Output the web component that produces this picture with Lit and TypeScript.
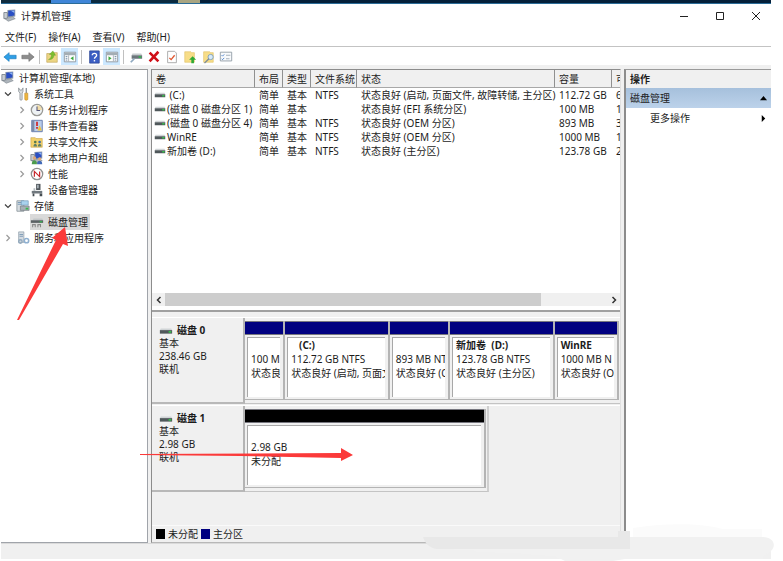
import { LitElement, html, svg, css, nothing } from "lit";
import { customElement } from "lit/decorators.js";
import { classMap } from "lit/directives/class-map.js";

const drive = svg`<path d="M2 5h12l1 2H1z" fill="#d0d4d6"/><path d="M1 7h14v4H1z" fill="#50585b"/><path d="M11 8h3v2h-3z" fill="#35c04a"/>`;
const monitor = svg`<path d="M5 1l9-0.500v8L5 10z" fill="#8d99a8"/><path d="M6 2l7-.5v6L6 8.600z" fill="#2a4fc4"/><path d="M9 2l4-.4v3z" fill="#8fb4f2"/><path d="M1 4h4v7H1z" fill="#c9ced3" stroke="#7c858e"/><path d="M2 11l9-2 3 2-8 3z" fill="#aeb5bc" stroke="#717a83" stroke-width=".6"/>`;
const folder = svg`<path d="M1 3h5l1 1h7v10H1z" fill="#f2d16b" stroke="#c79c3c" stroke-width=".6"/>`;

const icons: Record<string, unknown> = {
  computer: monitor,
  drive,
  back: svg`<path d="M1 8l6-5v3h8v4H7v3z" fill="#2f9fe6" stroke="#1878b8" stroke-width=".7"/>`,
  forward: svg`<path d="M15 8L9 3v3H1v4h8v3z" fill="#8d8d8d" stroke="#6e6e6e" stroke-width=".7"/>`,
  upFolder: svg`<path d="M2 4h5l1-1h6v11H2z" fill="#ecd583" stroke="#bfa254" stroke-width=".7"/><path d="M4 11c3 0 6-1 6-5h2L9 1 5 5h2.500c0 3-1.500 5-3.500 6z" fill="#7cbf2e" stroke="#5a9a26" stroke-width=".5"/>`,
  tree: svg`<path d="M1.500 2.500h13v11h-13z" fill="#fff" stroke="#8a949b"/><path d="M2 3h12v3H2z" fill="#a3adb4"/><path d="M6 6h1v7H6z" fill="#a3adb4"/><path d="M3 7.500h2M3 9.500h2M3 11.500h2" stroke="#6782a0"/><path d="M12 7v5L8.500 9.500z" fill="#3aa83e"/>`,
  pane: svg`<path d="M1.500 2.500h13v11h-13z" fill="#fff" stroke="#8a949b"/><path d="M2 3h12v3H2z" fill="#a3adb4"/><path d="M9 6h1v7H9z" fill="#a3adb4"/><path d="M11 7.500h2M11 9.500h2M11 11.500h2" stroke="#6782a0"/><path d="M4 7v5l3.500-2.500z" fill="#3aa83e"/>`,
  help: svg`<path d="M3 1h11v14H3z" fill="#3c5fc4" stroke="#26408f" stroke-width=".8"/><path d="M6 6c0-3 5-3 5 0 0 2-2.500 2-2.500 4" fill="none" stroke="#fff" stroke-width="1.500"/><path d="M7.700 11.500h1.600v1.600H7.700z" fill="#fff"/>`,
  connect: svg`<path d="M4 4h10l1 2H3z" fill="#c8cdd0"/><path d="M3 6h12v4H3z" fill="#6b757b"/><path d="M11 7h3v2h-3z" fill="#35b050"/><path d="M6 10l-4 4" stroke="#8fa9c0" stroke-width="2"/>`,
  remove: svg`<path d="M3 3l10 10M13 2L3 13" stroke="#d01018" stroke-width="3"/>`,
  check: svg`<path d="M3 1.500h8l2 2v11H3z" fill="#fff" stroke="#a4a4a4"/><path d="M5 9l2 2 4-5" fill="none" stroke="#e0552e" stroke-width="1.500"/>`,
  upload: svg`<path d="M2 2h7l1 1h3v11H2z" fill="#f7dd88" stroke="#e0c066" stroke-width=".7"/><path d="M11 7l4 4h-2.500v4h-3v-4H7z" fill="#2faa35"/>`,
  search: svg`<path d="M3 2h7l1 1h3v11H3z" fill="#f7dd88" stroke="#e0c066" stroke-width=".7"/><circle cx="11" cy="8" r="3" fill="#d5eafa" stroke="#7d9db8"/><path d="M9 10l-5 5" stroke="#7d8c98" stroke-width="1.600"/>`,
  list: svg`<path d="M1.500 2.500h13v10h-13z" fill="#f8fafc" stroke="#8f9aa3"/><path d="M3 6l1 1 2-2M3 10l1 1 2-2" fill="none" stroke="#3d78c8"/><path d="M8 6h5M8 10h4" stroke="#9aa7b2"/>`,
  tools: svg`<path d="M3 1v4l1.500 2v7c0 1.500 2.500 1.500 2.500 0V7l1-2V1L6.500 3.500h-2z" fill="#d9dde0" stroke="#80878c" stroke-width=".8"/><path d="M11 1h1.500v6H11z" fill="#8c9296"/><path d="M10 7h3.500v7c0 1.500-3.500 1.500-3.500 0z" fill="#efb63d" stroke="#b98222" stroke-width=".6"/>`,
  clock: svg`<circle cx="8" cy="8" r="6.500" fill="#eef2f4" stroke="#9a9a96" stroke-width="1.500"/><path d="M8 2.500A5.500 5.500 0 0 1 13.500 8H8z" fill="#f1dca8"/><path d="M8 4v4.500h3.500" fill="none" stroke="#557" stroke-width="1.200"/>`,
  events: svg`<path d="M2 1.500h12v13H2z" fill="#b9cdec" stroke="#5d75a8"/><path d="M2 2h3v12H2z" fill="#7c8ca8"/><path d="M8 3v5" stroke="#d12a2a" stroke-width="2"/><path d="M7 9h2v2H7z" fill="#d12a2a"/><path d="M11 7l2.500 6h-5z" fill="#eec23a"/>`,
  shared: svg`${folder}<circle cx="6" cy="8" r="1.500" fill="#55784c"/><circle cx="11" cy="8" r="1.500" fill="#3e6ea8"/><path d="M4 13c0-4 4-4 4 0zM9 13c0-4 4-4 4 0z" fill="#5e7f6a"/>`,
  users: svg`${monitor}<circle cx="5" cy="8" r="2" fill="#dca878"/><path d="M2 15c0-6 6-6 6 0z" fill="#4c9c4c"/><circle cx="11" cy="9" r="1.800" fill="#dca878"/><path d="M8 15c0-5 6-5 6 0z" fill="#4069b8"/>`,
  perf: svg`<circle cx="8" cy="8" r="6.500" fill="#fff" stroke="#8f8f8f" stroke-width="1.500"/><path d="M5 11V5l6 6V5" fill="none" stroke="#c9282d" stroke-width="1.400"/>`,
  device: svg`<path d="M7 1h5v7H7z" fill="#50575c"/><path d="M8 2h2v4H8z" fill="#a8b2b8"/><path d="M2 9h12v3H2z" fill="#70787e"/><path d="M3 12h2v3H3zM11 12h3v3h-3z" fill="#454c51"/><path d="M4 6h2v3H4z" fill="#b5bcc0"/>`,
  storage: svg`<path d="M1 2h8v12H1z" fill="#d7dde1" stroke="#7b868d" stroke-width=".8"/><path d="M2 4h5M2 6h5" stroke="#6f93b4"/><path d="M6 2h8v5H6z" fill="#a9d2ee" stroke="#6a92b5" stroke-width=".7"/><path d="M5 8h10v5H5z" fill="#a7b0b6" stroke="#6c757b" stroke-width=".7"/><path d="M11 10h3v2h-3z" fill="#37b84b"/>`,
  disks: svg`<path d="M4 4h10l1 2H3z" fill="#c3c7c9"/><path d="M1 6h14v3H1z" fill="#5b6164"/><path d="M11 7h3v1.500h-3z" fill="#35b050"/><path d="M3 14v-3h3v3M9 14v-3h3v3" fill="none" stroke="#888" stroke-width="1.200"/>`,
  services: svg`<path d="M3 1h6v12H3z" fill="#d3dae0" stroke="#8f9da9" stroke-width=".8"/><path d="M4 4h4M4 6h4" stroke="#7796b4"/><circle cx="12" cy="11" r="2.500" fill="none" stroke="#8fb0d0" stroke-width="1.800"/><circle cx="5" cy="12" r="2" fill="none" stroke="#92a9bd" stroke-width="1.500"/>`,
};

const icon = (name: string) =>
  html`<svg class="icon" viewBox="0 0 16 16" aria-hidden="true">${icons[name]}</svg>`;

interface Node { name: string; icon: string; level: number; open?: boolean; leaf?: boolean; selected?: boolean; }
const nodes: Node[] = [
  { name: "计算机管理(本地)", icon: "computer", level: 0 },
  { name: "系统工具", icon: "tools", level: 1, open: true },
  { name: "任务计划程序", icon: "clock", level: 2 },
  { name: "事件查看器", icon: "events", level: 2 },
  { name: "共享文件夹", icon: "shared", level: 2 },
  { name: "本地用户和组", icon: "users", level: 2 },
  { name: "性能", icon: "perf", level: 2 },
  { name: "设备管理器", icon: "device", level: 2, leaf: true },
  { name: "存储", icon: "storage", level: 1, open: true },
  { name: "磁盘管理", icon: "disks", level: 2, leaf: true, selected: true },
  { name: "服务和应用程序", icon: "services", level: 1 },
];

const tools: (string | null)[][] = [
  ["back", "后退"], ["forward", "前进"], [null],
  ["upFolder", "上一级"], ["tree", "显示/隐藏控制台树", "on"], [null],
  ["help", "帮助"], ["pane", "显示/隐藏操作窗格", "on"], [null],
  ["connect", "连接"], ["remove", "删除"], ["check", "属性"],
  ["upload", "打开"], ["search", "浏览"], ["list", "设置"],
];

const volumes = [
  ["\u00a0(C:)", "NTFS", "状态良好 (启动, 页面文件, 故障转储, 主分区)", "112.72 GB", "6"],
  ["(磁盘 0 磁盘分区 1)", "", "状态良好 (EFI 系统分区)", "100 MB", "1"],
  ["(磁盘 0 磁盘分区 4)", "NTFS", "状态良好 (OEM 分区)", "893 MB", "3"],
  ["WinRE", "NTFS", "状态良好 (OEM 分区)", "1000 MB", "1"],
  ["新加卷 (D:)", "NTFS", "状态良好 (主分区)", "123.78 GB", "2"],
];

interface Part { title: string; size: string; state: string; }
const disks: { name: string; size: string; free?: boolean; parts: Part[] }[] = [
  {
    name: "磁盘 0", size: "238.46 GB",
    parts: [
      { title: "", size: "100 M", state: "状态良" },
      { title: "\u00a0\u00a0\u00a0(C:)", size: "112.72 GB NTFS", state: "状态良好 (启动, 页面文" },
      { title: "", size: "893 MB NT", state: "状态良好 (O" },
      { title: "新加卷\u00a0\u00a0(D:)", size: "123.78 GB NTFS", state: "状态良好 (主分区)" },
      { title: "WinRE", size: "1000 MB N", state: "状态良好 (O" },
    ],
  },
  { name: "磁盘 1", size: "2.98 GB", free: true, parts: [{ title: "", size: "2.98 GB", state: "未分配" }] },
];

@customElement("app-root")
export class AppRoot extends LitElement {
  static styles = css`
    :host {
      display: flex; flex-direction: column; position: relative; box-sizing: border-box;
      min-height: 100vh; padding: 0 12px 2px 1px; background: #fff; color: #1c1c1c;
      font: 10px/14px "Noto Sans", "Noto Sans CJK SC", sans-serif; overflow: hidden;
    }
    *, *::before { box-sizing: border-box; }
    button { font: inherit; color: inherit; background: none; border: 0; padding: 0; text-align: left; }
    ul { list-style: none; margin: 0; padding: 0; }
    .icon { width: 14px; height: 14px; flex: none; display: block; }
    .desktop {
      height: 4px; border-bottom: 1px solid #2a6c98;
      background: linear-gradient(90deg, #102c3e 50px, #3f86d8 50px 90px, #0a2a40 90px 177px, #a9a582 177px 199px, #04203a 199px);
    }
    .title { display: flex; align-items: center; height: 24px; padding-left: 2px; gap: 4px; }
    .title h1 { font: inherit; margin: 0; flex: 1; }
    .winbtns { display: flex; gap: 6px; }
    .winbtns button { width: 30px; height: 22px; display: grid; place-items: center; }
    .winbtns svg { width: 10px; height: 10px; fill: none; stroke: #222; }
    .menu { display: flex; gap: 12px; height: 18px; padding-left: 4px; align-items: center; }
    .tools { display: flex; align-items: center; gap: 1px; height: 19px; border-top: 1px solid #c3c3c3; padding-top: 1px; }
    .tools button { width: 17px; height: 17px; display: grid; place-items: center; }
    .tools .on { background: #cce8ff; }
    .sep { width: 1px; height: 14px; margin: 0 2px; background: #c0c0c0; }
    .main {
      flex: 1; display: grid; grid-template-columns: 147px minmax(0, 1fr) 147px; gap: 3px;
      background: #f0f0f0; padding-top: 4px;
    }
    .tree, .actions { background: #fff; border-top: 1px solid #9a9a9a; }
    .tree { border-right: 1px solid #a0a4aa; border-bottom: 1px solid #a0a4aa; }
    .node { display: flex; align-items: center; height: 16px; white-space: nowrap; }
    .l1 { padding-left: 2px; } .l2 { padding-left: 16px; }
    .twist { width: 10px; height: 10px; margin-right: 3px; fill: none; stroke: #9a9a9a; stroke-width: 1.2; }
    .twist.open { stroke: #404040; }
    .label { display: flex; align-items: center; gap: 4px; height: 16px; padding-right: 2px; }
    .label.selected { background: #d9d9d9; }
    .center {
      display: flex; flex-direction: column; border: 1px solid #8c8c8c; border-right: 1px solid #e0e0e0;
      border-bottom-color: #b8b8b8; min-width: 0;
    }
    .list { display: flex; flex-direction: column; height: 242px; background: #fff; border-bottom: 2px solid #a0a0a0; overflow: hidden; }
    table { border-collapse: separate; border-spacing: 0; table-layout: fixed; width: 100%; }
    th, td { font-weight: normal; text-align: left; white-space: nowrap; padding: 0 0 0 4px; height: 14px; line-height: 14px; }
    th { height: 18px; background: #f0f0f0; border-right: 1px solid #909090; border-bottom: 1px solid #a8a8a8; }
    th:last-child { border-right: 0; }
    .c1 { width: 103px; } .c2 { width: 28px; } .c3 { width: 28px; } .c4 { width: 46px; } .c5 { width: 198px; } .c6 { width: 57px; }
    .vol { display: flex; align-items: center; gap: 1px; margin-left: -2px; }
    .vol .icon { width: 12px; }
    .scroll { display: flex; align-items: center; height: 13px; margin: auto 0 4px; background: #f0f0f0; }
    .scroll button { width: 13px; display: grid; place-items: center; }
    .scroll svg { width: 8px; height: 8px; fill: none; stroke: #333; stroke-width: 1.5; }
    .track { flex: 1; height: 13px; }
    .thumb { width: 85%; height: 13px; background: #cdcdcd; }
    .disks { flex: 1; padding-top: 5px; background: #f0f0f0; }
    .disk { display: grid; grid-template-columns: 93px minmax(0, 1fr); border-top: 1px solid #fff; margin-bottom: 1px; }
    .info { border-right: 2px solid #b4b4b4; border-bottom: 2px solid #b8b8b8; padding: 6px 0 0 7px; height: 86px; line-height: 13px; }
    .info h2 { display: flex; align-items: center; gap: 4px; margin: 0; height: 13px; font: inherit; font-weight: bold; }
    .map { border-bottom: 1px solid #c4c4c4; padding: 3px 1px 3px 0; display: grid; grid-template-columns: 40fr 104fr 60fr 104fr 64fr; }
    .map.free { grid-template-columns: 1fr; width: 65%; border-right: 2px solid #cfcfcf; }
    .part { display: flex; flex-direction: column; min-width: 0; border-right: 2px solid #b4b4b4; border-bottom: 1px solid #b4b4b4; }
    .bar { height: 14px; background: #000080; border: 1px solid #77777f; border-width: 1px 0; }
    .free .bar { background: #000; }
    .box { flex: 1; margin: 2px 3px 2px 2px; padding: 0 0 0 3px; background: #fff; border: 1px solid #a8a8a8; border-width: 1px 0 0 1px; white-space: nowrap; overflow: hidden; }
    .box p, .info p { margin: 0; }
    .box p { height: 14px; }
    .name { font-weight: bold; }
    .legend { display: flex; align-items: center; gap: 3px; height: 17px; padding-left: 4px; border-top: 1px solid #fafafa; }
    .key { width: 9px; height: 10px; background: #000; }
    .key.primary { background: #000080; }
    .actions { border-left: 2px solid #8c8c8c; }
    .actions h2 { margin: 0; height: 18px; line-height: 18px; font-size: 10px; padding-left: 4px; background: #f0f0f0; }
    .actions button { display: flex; justify-content: space-between; align-items: center; width: 100%; padding: 0 4px; height: 20px; }
    .actions .group { background: linear-gradient(#a6c0dc, #bcd2ea); }
    .actions .more { padding-left: 24px; }
    .actions svg { width: 7px; height: 7px; }
    .status { height: 16px; background: #f0f0f0; border-top: 1px solid #dadada; }
    .smudge { position: absolute; left: 423px; top: 524px; width: 352px; height: 37px; }
    .arrow { position: absolute; fill: #fb3a3a; pointer-events: none; }
    .a1 { left: 16px; top: 226px; width: 56px; height: 96px; }
    .a2 { left: 140px; top: 447px; width: 214px; height: 16px; }
  `;

  private node(n: Node) {
    return html`<li class="node l${n.level}">
      ${n.level ? html`<svg class=${classMap({ twist: true, open: !!n.open })} viewBox="0 0 10 10" aria-hidden="true">
        ${n.leaf ? nothing : n.open ? svg`<path d="M2 3.500l3 3 3-3"/>` : svg`<path d="M3.500 2l3 3-3 3"/>`}</svg>` : nothing}
      <button class=${classMap({ label: true, selected: !!n.selected })}>${icon(n.icon)}${n.name}</button>
    </li>`;
  }

  render() {
    return html`
      <div class="desktop"></div>
      <header class="title">
        ${icon("computer")}<h1>计算机管理</h1>
        <div class="winbtns">
          <button aria-label="最小化"><svg viewBox="0 0 10 10"><path d="M1 5.500h8"/></svg></button>
          <button aria-label="最大化"><svg viewBox="0 0 10 10"><path d="M1.500 1.500h7v7h-7z"/></svg></button>
          <button aria-label="关闭"><svg viewBox="0 0 10 10"><path d="M1 1l8 8M9 1L1 9"/></svg></button>
        </div>
      </header>
      <nav class="menu">${["文件(F)", "操作(A)", "查看(V)", "帮助(H)"].map((m) => html`<button>${m}</button>`)}</nav>
      <div class="tools" role="toolbar">
        ${tools.map(([n, label, on]) => n
          ? html`<button class=${classMap({ on: !!on })} aria-label=${label}>${icon(n)}</button>`
          : html`<span class="sep"></span>`)}
      </div>
      <main class="main">
        <ul class="tree">${nodes.map((n) => this.node(n))}</ul>
        <section class="center">
          <div class="list">
            <table>
              <colgroup><col class="c1"><col class="c2"><col class="c3"><col class="c4"><col class="c5"><col class="c6"><col></colgroup>
              <thead><tr>${["卷", "布局", "类型", "文件系统", "状态", "容量", "可"].map((h) => html`<th>${h}</th>`)}</tr></thead>
              <tbody>${volumes.map(([v, fs, st, cap, free]) => html`<tr>
                <td><div class="vol">${icon("drive")}${v}</div></td><td>简单</td><td>基本</td><td>${fs}</td><td>${st}</td><td>${cap}</td><td>${free}</td>
              </tr>`)}</tbody>
            </table>
            <div class="scroll">
              <button aria-label="向左滚动"><svg viewBox="0 0 8 8"><path d="M5.500 1l-3 3 3 3"/></svg></button>
              <div class="track"><div class="thumb"></div></div>
              <button aria-label="向右滚动"><svg viewBox="0 0 8 8"><path d="M2.500 1l3 3-3 3"/></svg></button>
            </div>
          </div>
          <div class="disks">
            ${disks.map((d) => html`<div class="disk">
              <div class="info"><h2>${icon("drive")}${d.name}</h2><p>基本</p><p>${d.size}</p><p>联机</p></div>
              <div class=${classMap({ map: true, free: !!d.free })}>
                ${d.parts.map((p) => html`<div class="part"><div class="bar"></div>
                  <div class="box"><p class="name">${p.title}</p><p>${p.size}</p><p>${p.state}</p></div></div>`)}
              </div>
            </div>`)}
          </div>
          <div class="legend"><span class="key"></span>未分配<span class="key primary"></span>主分区</div>
        </section>
        <aside class="actions">
          <h2>操作</h2>
          <button class="group">磁盘管理<svg viewBox="0 0 8 8"><path d="M4 1l4 5H0z"/></svg></button>
          <button class="more">更多操作<svg viewBox="0 0 8 8"><path d="M2 0l4 4-4 4z"/></svg></button>
        </aside>
      </main>
      <footer class="status"></footer>
      <svg class="smudge" viewBox="0 0 352 37" aria-hidden="true">
        <path d="M210 4c40-6 70-4 90 1h39v8H210z" fill="#fbfbfb"/>
        <path d="M0 13h340c10 0 14 8 8 14l-8 5v3H202l-12 2h-48l-10-5L20 25c-10-1-16-6-20-12z" fill="#f1f1f1"/>
        <path d="M0 13h195V7h12v18H14C6 24 2 19 0 13z" fill="#e8e8e8"/>
      </svg>
      <svg class="arrow a1" viewBox="0 0 56 96" aria-hidden="true"><path d="M49 1l3 19-5-2L3 94H1L40 14l-4-2z"/></svg>
      <svg class="arrow a2" viewBox="0 0 214 16" aria-hidden="true"><path d="M0 7l201-1V1l12 7-12 6v-3L100 9 0 8z"/></svg>
    `;
  }
}
